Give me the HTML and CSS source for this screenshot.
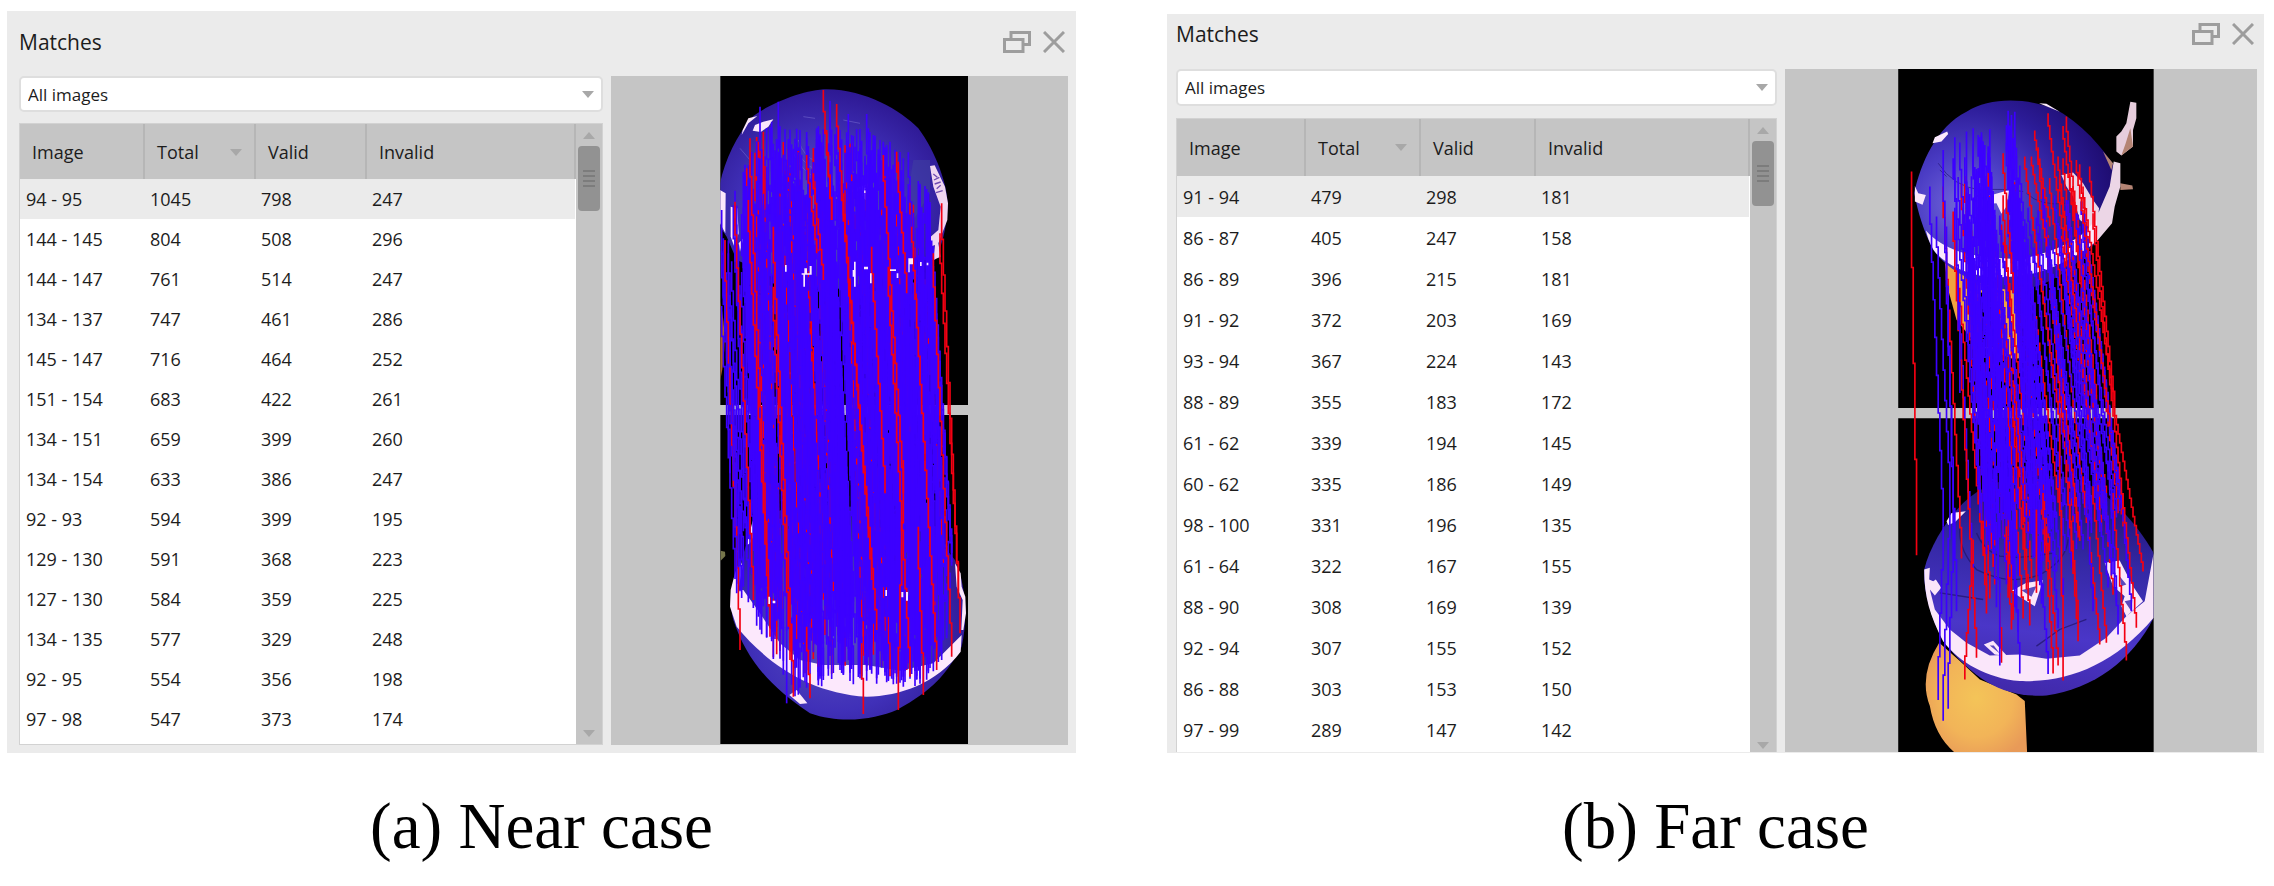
FILE: index.html
```html
<!DOCTYPE html>
<html lang="en">
<head>
<meta charset="utf-8">
<title>Matches</title>
<link rel="stylesheet" href="styles.css">
</head>
<body>
<main class="figures">
  <figure class="figure near">
    <section class="panel">
      <header class="titlebar">
        <h2 class="title">Matches</h2>
        <button class="tool" type="button" aria-label="Restore"><svg width="28" height="22" viewBox="0 0 28 22"><path d="M8 7V1.500H26.500V13.500H20" /><rect x="1.500" y="8.500" width="18.500" height="12" /></svg></button>
        <button class="tool" type="button" aria-label="Close"><svg width="22" height="22" viewBox="0 0 22 22"><path d="M1 1L21 21M21 1L1 21" /></svg></button>
      </header>
      <div class="content">
        <div class="side">
          <div class="combo"><select aria-label="Filter images"><option>All images</option></select></div>
          <div class="list">
            <table class="matches" data-rows="94 - 95,1045,798,247;144 - 145,804,508,296;144 - 147,761,514,247;134 - 137,747,461,286;145 - 147,716,464,252;151 - 154,683,422,261;134 - 151,659,399,260;134 - 154,633,386,247;92 - 93,594,399,195;129 - 130,591,368,223;127 - 130,584,359,225;134 - 135,577,329,248;92 - 95,554,356,198;97 - 98,547,373,174">
              <thead><tr><th class="c1">Image</th><th class="c2 sorted">Total</th><th class="c3">Valid</th><th>Invalid</th></tr></thead>
              <tbody></tbody>
            </table>
            <div class="scroll"><button class="up" type="button" aria-label="Scroll up"></button><div class="thumb"><i></i><i></i><i></i><i></i></div><button class="down" type="button" aria-label="Scroll down"></button></div>
          </div>
        </div>
        <svg class="view" viewBox="-267 48 1371 2007" role="img" aria-label="Matched points, near case">
          <defs>
            <radialGradient id="ballA" cx=".45" cy=".6" r=".65"><stop offset="0" stop-color="#5850c0"/><stop offset=".55" stop-color="#4030b8"/><stop offset="1" stop-color="#2a148c"/></radialGradient>
            <clipPath id="clipA"><path d="M61 47H804V1035H61Z"/></clipPath>
          </defs>
          <path d="M61 48H804V1035H61ZM61 1065H804V2052H61Z" fill="#000"/>
          <g clip-path="url(#clipA)">
            <path fill="url(#ballA)" d="M60 370C75 300 110 225 160 168C220 125 320 88 380 88C500 90 600 150 655 205C715 285 750 400 742 450C738 520 720 570 705 600L640 600L600 625L480 690L320 680L200 640L110 600L80 530L60 500Z"/>
            <path fill="#4040a0" opacity=".6" d="M640 300L690 300L690 400L640 480L620 420Z"/>
            <path fill="none" stroke="#6a5cc8" stroke-width="3" opacity=".7" d="M285 250Q300 310 350 330M295 240Q310 290 350 305M280 280Q310 340 350 352M430 180L480 190M310 170L345 175M120 265L150 300"/>
            <path fill="#fbe6fb" d="M60 390L77 400L76 520L60 490ZM92 440L112 445L116 520L103 560L92 530ZM158 212L165 195L190 185L220 178L205 200L182 216ZM128 210L145 175L172 168L145 190L125 225ZM450 396L470 384L508 370L508 430L486 410L490 392ZM116 550L130 535L120 575Z"/>
            <path fill="#f0d6f0" d="M690 318L704 316L735 380L744 430L742 480L715 550L722 590L700 600L705 555L690 560L692 530L715 510L722 440L700 380Z"/>
            <path fill="none" stroke="#6f4ab0" stroke-width="4" d="M700 342L712 352M702 360L718 352M704 372L722 366M710 386L722 376M708 398L728 392"/>
            <path fill="#b45a20" d="M61 725Q86 840 61 960Z"/>
          </g>
          <g transform="translate(0 1020)">
            <path fill="url(#ballA)" d="M160 360L125 480C95 540 85 600 100 660C140 780 210 860 330 940C430 975 530 955 590 930C700 870 740 820 785 740C803 660 800 560 765 480L700 400L600 330L300 310Z"/>
            <path fill="#fce8fc" d="M158 362L168 400L150 430L140 436ZM120 480L128 500L115 570L130 570L180 640L240 730L300 780L370 795L500 795L600 812L700 790L785 705L782 755C710 850 600 888 500 890C330 880 200 790 110 680L90 620L92 570L105 520ZM765 490L782 520L785 560L796 590L798 640L790 690L784 690L788 600L770 560ZM268 885L290 870L322 910L300 912Z"/>
            <path fill="#75754a" d="M62 452L75 455L76 468L62 482Z"/>
          </g>
          <g class="lines" data-scene="near"></g>
          <path fill="#fce8fc" d="M305 640h8v-15h8v15h8v-22h6v26h-20v36h-5v-36h-5ZM255 615h5v20h-5ZM462 605h5v75h-5v-30h-4v-20h4ZM492 620h12v8h-12ZM510 640h5v30h-5ZM570 628h18v5h-18ZM590 640h5v14h-5ZM625 595h14v18h-10v24h-4ZM660 606h5v12h-5ZM680 608h5v8h-5ZM604 1596h6v16h-6ZM618 1596h6v26h-6ZM556 1590h5v18h-5ZM205 1610h5v22h-5ZM218 1622h8v8h-8Z"/>
        </svg>
      </div>
    </section>
    <figcaption class="caption">(a) Near case</figcaption>
  </figure>

  <figure class="figure far">
    <section class="panel">
      <header class="titlebar">
        <h2 class="title">Matches</h2>
        <button class="tool" type="button" aria-label="Restore"><svg width="28" height="22" viewBox="0 0 28 22"><path d="M8 7V1.500H26.500V13.500H20" /><rect x="1.500" y="8.500" width="18.500" height="12" /></svg></button>
        <button class="tool" type="button" aria-label="Close"><svg width="22" height="22" viewBox="0 0 22 22"><path d="M1 1L21 21M21 1L1 21" /></svg></button>
      </header>
      <div class="content">
        <div class="side">
          <div class="combo"><select aria-label="Filter images"><option>All images</option></select></div>
          <div class="list">
            <table class="matches" data-rows="91 - 94,479,298,181;86 - 87,405,247,158;86 - 89,396,215,181;91 - 92,372,203,169;93 - 94,367,224,143;88 - 89,355,183,172;61 - 62,339,194,145;60 - 62,335,186,149;98 - 100,331,196,135;61 - 64,322,167,155;88 - 90,308,169,139;92 - 94,307,155,152;86 - 88,303,153,150;97 - 99,289,147,142">
              <thead><tr><th class="c1">Image</th><th class="c2 sorted">Total</th><th class="c3">Valid</th><th>Invalid</th></tr></thead>
              <tbody></tbody>
            </table>
            <div class="scroll"><button class="up" type="button" aria-label="Scroll up"></button><div class="thumb"><i></i><i></i><i></i><i></i></div><button class="down" type="button" aria-label="Scroll down"></button></div>
          </div>
        </div>
        <svg class="view" viewBox="-285 27 1416 2052" role="img" aria-label="Matched points, far case">
          <defs>
            <radialGradient id="ballB" cx=".25" cy=".55" r=".75"><stop offset="0" stop-color="#7468dc"/><stop offset=".35" stop-color="#4a3cc4"/><stop offset=".7" stop-color="#2c1c98"/><stop offset="1" stop-color="#1e0c70"/></radialGradient>
            <linearGradient id="ballC" x1=".5" y1="0" x2=".35" y2="1"><stop offset="0" stop-color="#1c1070"/><stop offset=".35" stop-color="#3428a4"/><stop offset=".7" stop-color="#4a36c8"/><stop offset="1" stop-color="#4028a8"/></linearGradient>
            <radialGradient id="skin" cx=".5" cy=".5" r=".6"><stop offset="0" stop-color="#f4c458"/><stop offset=".6" stop-color="#f2b458"/><stop offset="1" stop-color="#e89a58"/></radialGradient>
            <clipPath id="clipB"><path d="M55 56H822V1059H55Z"/></clipPath>
          </defs>
          <path d="M55 27H822V1045H55ZM55 1076H822V2079H55Z" fill="#000"/>
          <path fill="#f0a440" d="M195 610L300 640L410 685L425 895L400 898L350 880L305 860L270 830L230 780L205 690Z"/>
          <path fill="#000" d="M300 700L340 690L345 862L305 862Z"/>
          <path fill="url(#ballB)" d="M103 400C122 310 170 200 260 155C330 112 440 110 535 152C620 200 680 280 712 330C722 420 690 500 650 545C580 640 480 690 400 692C300 680 210 640 160 570C130 510 115 460 103 400Z"/>
          <path fill="none" stroke="#241878" stroke-width="3" opacity=".7" d="M175 310Q220 380 300 390Q370 385 430 395M180 330L200 350M440 400Q480 440 560 430"/>
          <path fill="#e6cddc" d="M752 125L770 128L770 175L760 210L760 260L725 287L710 275L710 230L725 215L740 190Z"/>
          <path fill="#b48474" d="M752 205L760 260L725 287L738 250ZM722 370L758 377L760 388L722 390ZM670 275L700 310L695 330Z"/>
          <path fill="#ecd6e6" d="M702 305L722 310L722 380L705 440L697 490L655 540L640 500L660 450L690 380ZM545 345L580 338L610 370L640 420L658 445L650 520L600 480L580 410L560 380Z"/>
          <path fill="#fbe9fd" d="M138 512Q180 560 260 582Q340 596 420 598Q520 580 600 530L650 480L655 540Q600 590 500 630Q420 656 330 652Q230 640 170 582Q150 560 138 512ZM158 250L165 232L202 215L205 222L185 245ZM105 378L115 400L138 405L128 435L105 425ZM320 410L388 390L380 440L365 462L350 430L325 432ZM478 130L500 131L540 155Z"/>
          <g transform="translate(0 1020)" clip-path="url(#clipB)">
            <path fill="url(#skin)" d="M178 730L235 780L300 840L410 885L435 905L442 1060L225 1060Q165 1010 150 920Q115 830 178 730Z"/>
            <path fill="url(#ballC)" d="M133 510C150 440 200 360 250 310C320 240 440 215 580 235C680 265 770 370 822 460V655C760 780 640 870 500 888C380 895 290 850 190 725C150 650 130 570 133 510Z"/>
            <path fill="none" stroke="#21156c" stroke-width="4" opacity=".75" d="M240 385Q235 450 290 510Q400 565 490 520Q560 480 565 420M290 400Q310 450 360 470Q430 480 520 460M180 580L310 600M470 740L540 690L620 660"/>
            <path fill="#fae6fa" d="M133 510L150 505L148 540L160 545L168 540L184 565L165 588L150 570L165 630L210 690L260 730L330 768L420 765L500 778L600 768L680 715L740 650L795 605L822 460V655C700 800 560 850 420 845C320 835 240 790 190 725C150 650 133 590 133 510ZM200 365L215 340L258 335L225 368L205 376ZM393 575L440 550L490 542L465 620ZM312 735L340 724L382 770L345 765ZM675 490L720 483L760 560L790 605L740 650L725 620L735 590L700 560Z"/>
            <path fill="#5a48bc" d="M425 572L470 560L455 592ZM330 738L342 738L360 762ZM720 530L740 555L725 560ZM735 605L758 600L755 635Z"/>
          </g>
          <g class="lines" data-scene="far"></g>
        </svg>
      </div>
    </section>
    <figcaption class="caption">(b) Far case</figcaption>
  </figure>
</main>
<script src="script.js"></script>
</body>
</html>
```

FILE: styles.css
```css
* { box-sizing: border-box; }

body {
  margin: 0;
  background: #fff;
  color: #1c1c1c;
  font-family: "Open Sans", "Noto Sans", sans-serif;
}

.figures {
  display: grid;
  grid-template-columns: 1069fr 1097fr;
  column-gap: 91px;
  padding: 11px 10px 0 7px;
}

.figure {
  display: flex;
  flex-direction: column;
  margin: 0;
}

.panel {
  flex: 1;
  padding: 0 8px 8px 12px;
  background: #ebebeb;
}

.titlebar {
  display: flex;
  align-items: center;
  gap: 12px;
  height: 65px;
  padding: 0 3px 3px 0;
}

.title {
  flex: 1;
  margin: 0;
  font-size: 21px;
  font-weight: 400;
}

.tool {
  display: flex;
  padding: 0;
  border: 0;
  background: none;
}

.tool svg {
  fill: none;
  stroke: #9d9d9d;
  stroke-width: 3;
}

.content {
  display: grid;
  grid-template-columns: 584fr 457fr;
  column-gap: 8px;
}

.side {
  display: flex;
  flex-direction: column;
  gap: 11px;
}

.combo { position: relative; }

.combo select {
  display: block;
  width: 100%;
  height: 36px;
  padding: 0 7px;
  border: 2px solid #dedede;
  border-radius: 5px;
  background: #fff;
  color: #1c1c1c;
  font: inherit;
  font-size: 17px;
  appearance: none;
}

.combo::after,
.sorted::after,
.up::after,
.down::after {
  content: "";
  border: 6px solid transparent;
  border-top: 7px solid #a8a8a8;
  border-bottom: 0;
}

.combo::after {
  position: absolute;
  top: 15px;
  right: 9px;
}

.list {
  display: flex;
  flex: 1;
  border: 1px solid #d2d2d2;
  background: #fff;
}

.matches {
  flex: 1;
  align-self: flex-start;
  border-collapse: collapse;
  table-layout: fixed;
  font-size: 18px;
}

.matches th {
  position: relative;
  height: 55px;
  padding: 0 12px;
  border-right: 2px solid #b6b6b6;
  background: #c5c5c5;
  font-weight: 400;
  text-align: left;
}

.c1 { width: 124px; }
.c2, .c3 { width: 111px; }

.sorted::after {
  position: absolute;
  top: 25px;
  right: 12px;
}

.matches td {
  height: 40px;
  padding: 0 6px;
}

.matches tbody tr:first-child { background: #ebebeb; }

.scroll {
  display: flex;
  flex-direction: column;
  align-items: center;
  width: 26px;
  background: #c5c5c5;
}

.up, .down {
  display: flex;
  align-items: center;
  justify-content: center;
  width: 26px;
  height: 22px;
  padding: 0;
  border: 0;
  background: none;
}

.up::after {
  border-top: 0;
  border-bottom: 7px solid #a8a8a8;
}

.thumb {
  display: flex;
  flex-direction: column;
  align-items: center;
  justify-content: center;
  gap: 3px;
  width: 22px;
  height: 65px;
  margin-bottom: auto;
  border-radius: 4px;
  background: #929292;
}

.thumb i {
  width: 12px;
  height: 2px;
  background: #7c7c7c;
}

.view {
  display: block;
  width: 100%;
  height: auto;
  background: #c5c5c5;
}

.lines path {
  fill: none;
  stroke-width: 5;
}

.lines .valid { stroke: #3c00ff; }
.lines .invalid { stroke: #f40012; }

.far .panel {
  margin-top: 3px;
  padding: 0 7px 0 9px;
}

.far .titlebar {
  height: 55px;
  padding: 0 3px 15px 0;
}

.far .side { gap: 12px; }
.far .combo select { height: 37px; }
.far .content { grid-template-columns: 602fr 472fr; }
.far .list { border-bottom: 0; }
.far .matches th { height: 57px; }
.far .matches td { height: 41px; }
.far .c1 { width: 128px; }
.far .c2, .far .c3 { width: 115px; }
.far .down { height: 14px; }

.caption {
  padding-top: 35px;
  color: #000;
  font-family: "Liberation Serif", serif;
  font-size: 65px;
  line-height: 76px;
  text-align: center;
}
```

FILE: script.js
```js
// Fill the match tables from their data attributes.
document.querySelectorAll('.matches').forEach(function (table) {
  var body = table.tBodies[0];
  table.dataset.rows.split(';').forEach(function (line) {
    var row = body.insertRow();
    line.split(',').forEach(function (value) {
      row.insertCell().textContent = value;
    });
  });
});

// Repeatable pseudo-random numbers, so the drawing is always the same.
function generator(seed) {
  return function () {
    seed = (seed * 1664525 + 1013904223) % 4294967296;
    return seed / 4294967296;
  };
}

// Linear interpolation in a list of [x, y] points.
function at(points, x) {
  for (var i = 1; i < points.length; i++) {
    if (x <= points[i][0]) {
      var a = points[i - 1], b = points[i];
      return a[1] + (b[1] - a[1]) * (x - a[0]) / (b[0] - a[0]);
    }
  }
  return points[points.length - 1][1];
}

// A match line stepped on a coarse pixel grid.
var CELL = 5;
function stepped(x1, y1, x2, y2) {
  var c1 = Math.round(x1 / CELL), c2 = Math.round(x2 / CELL);
  var n = Math.abs(c2 - c1) + 1, dir = c2 < c1 ? -1 : 1;
  var d = 'M' + (c1 * CELL) + ' ' + Math.round(y1);
  for (var i = 1; i <= n; i++) {
    d += 'V' + Math.round(y1 + (y2 - y1) * i / n);
    if (i < n) d += 'h' + (CELL * dir);
  }
  return d;
}

function draw(scene, lines) {
  var group = document.querySelector('[data-scene=' + scene + ']');
  lines.forEach(function (l) {
    var path = document.createElementNS('http://www.w3.org/2000/svg', 'path');
    path.setAttribute('class', l[4] ? 'invalid' : 'valid');
    path.setAttribute('d', stepped(l[0], l[1], l[2], l[3]));
    group.appendChild(path);
  });
}

function near() {
  var rnd = generator(7), lines = [], i, x, top, bottom, x2;
  var start = [[65, 500], [110, 380], [150, 270], [180, 200], [235, 170], [270, 190], [330, 220], [390, 160],
    [450, 200], [500, 200], [540, 230], [600, 270], [640, 330], [690, 390], [715, 500]];
  var end = [[90, 1600], [130, 1660], [170, 1710], [230, 1820], [290, 1920], [330, 1890], [400, 1880],
    [500, 1870], [600, 1880], [680, 1880], [750, 1760], [785, 1700]];
  for (i = 0; i < 540; i++) {
    x = 66 + rnd() * 640;
    if (x < 130 && rnd() < 0.65) continue;
    top = at(start, x) + rnd() * 330;
    x2 = x + 34 + rnd() * 22 + (x > 200 && x < 600 ? 20 : 0);
    x2 = Math.min(x2, 760);
    bottom = at(end, x2) - rnd() * 300;
    lines.push([x, top, x2, bottom, rnd() < (i < 300 ? 0.16 : 0.02)]);
  }
  [[368, 90, 396, 480], [408, 132, 425, 400], [425, 360, 530, 1710], [430, 400, 515, 1560],
    [218, 500, 280, 1910], [222, 680, 272, 1800], [150, 235, 212, 1730], [145, 420, 205, 1640],
    [103, 425, 158, 1620], [77, 540, 120, 1770], [180, 240, 190, 400], [548, 285, 610, 1300],
    [565, 620, 632, 1850], [592, 275, 620, 700], [632, 375, 712, 1830], [700, 580, 757, 1790],
    [726, 430, 778, 1720], [718, 520, 776, 1600], [319, 285, 350, 580],
    [338, 340, 370, 660], [612, 1200, 594, 1950], [515, 560, 556, 1300], [380, 210, 395, 480],
    [484, 1750, 488, 1962], [320, 1700, 330, 1915], [655, 1400, 668, 1905]
  ].forEach(function (l) { lines.push(l.concat(true)); });
  [[178, 140, 186, 400], [234, 125, 240, 400], [392, 122, 396, 300], [447, 162, 452, 400], [498, 162, 505, 400],
    [572, 245, 580, 500], [627, 277, 634, 500], [66, 450, 92, 1240], [85, 580, 110, 1600], [258, 1700, 262, 1930]
  ].forEach(function (l) { lines.push(l.concat(false)); });
  draw('near', lines);
}

function far() {
  var rnd = generator(21), lines = [], i, x, x2, y;
  var start = [[150, 380], [190, 270], [230, 235], [260, 215], [330, 210], [370, 290], [385, 155], [415, 215],
    [440, 300], [500, 400], [570, 330], [640, 500]];
  for (i = 0; i < 34; i++) {
    x = rnd() < 0.4 ? 215 + rnd() * 250 : 450 + rnd() * 170;
    y = (x < 450 ? 320 : 240) + rnd() * 400;
    x2 = x + 50 + (x - 200) * 0.15 + rnd() * 20;
    lines.push([x, y, x2, 1300 + rnd() * 400, true]);
  }
  for (i = 0; i < 118; i++) {
    x = 215 + rnd() * 400;
    if (i % 3 === 0) x = 250 + rnd() * 80;
    if (i % 7 === 0) x = 385 + rnd() * 40;
    y = at(start, x) + rnd() * 320;
    x2 = x + 50 + (x - 200) * 0.13 + rnd() * 25;
    lines.push([x, y, x2, 1330 + rnd() * rnd() * 400, false]);
  }
  [[94, 335, 111, 1487], [192, 380, 245, 1497], [218, 455, 292, 1795], [280, 1440, 254, 1860],
    [505, 160, 560, 620], [463, 212, 510, 500], [552, 198, 610, 700], [562, 170, 650, 1020],
    [630, 320, 705, 1040], [705, 1040, 792, 1536], [612, 380, 700, 1020], [436, 290, 540, 1100],
    [455, 290, 500, 560], [592, 300, 690, 1100], [536, 290, 640, 1200], [540, 1100, 548, 1863],
    [490, 1300, 518, 1842], [500, 1400, 535, 1818], [360, 1600, 364, 1810], [560, 1200, 597, 1745],
    [610, 1250, 660, 1755], [640, 1280, 680, 1750], [700, 1300, 740, 1803], [730, 1300, 768, 1705],
    [400, 1040, 440, 1590], [470, 1350, 470, 1600], [372, 280, 400, 700], [640, 460, 730, 1350],
    [380, 1400, 397, 1710], [310, 1400, 322, 1662]
  ].forEach(function (l) { lines.push(l.concat(true)); });
  [[151, 380, 192, 1400], [192, 1400, 176, 1922], [170, 470, 208, 1300], [208, 1300, 192, 1984],
    [200, 500, 222, 1400], [222, 1400, 207, 1948], [227, 232, 240, 1000], [192, 270, 228, 1655],
    [258, 215, 275, 900], [386, 152, 396, 500], [407, 155, 420, 600], [396, 165, 410, 700], [330, 208, 340, 600],
    [355, 1300, 358, 1818], [400, 1380, 422, 1842], [480, 1440, 504, 1844], [690, 1200, 714, 1725],
    [735, 1400, 755, 1655], [620, 1300, 640, 1655], [280, 205, 300, 900], [300, 240, 325, 900],
    [560, 420, 640, 1200], [590, 460, 680, 1350], [610, 500, 700, 1400]
  ].forEach(function (l) { lines.push(l.concat(false)); });
  draw('far', lines);
}

near();
far();
```
